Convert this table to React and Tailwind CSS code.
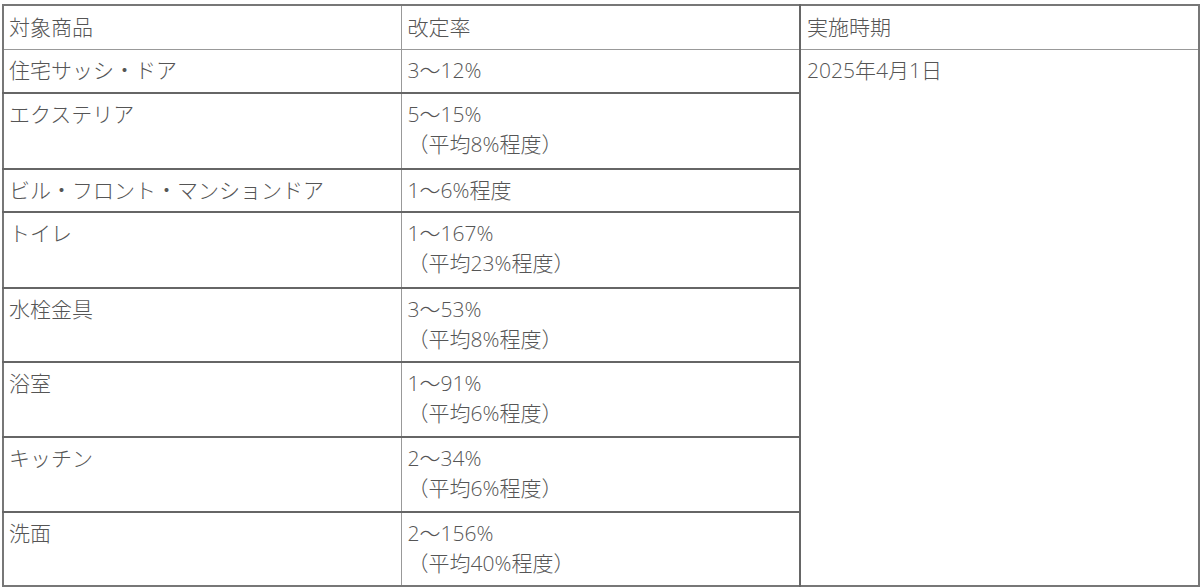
export default function App() {
  const rows = [
    { name: "住宅サッシ・ドア", rate: ["3〜12%"], h: 44 },
    { name: "エクステリア", rate: ["5〜15%", "（平均8%程度）"], h: 76 },
    { name: "ビル・フロント・マンションドア", rate: ["1〜6%程度"], h: 43 },
    { name: "トイレ", rate: ["1〜167%", "（平均23%程度）"], h: 76 },
    { name: "水栓金具", rate: ["3〜53%", "（平均8%程度）"], h: 74 },
    { name: "浴室", rate: ["1〜91%", "（平均6%程度）"], h: 75 },
    { name: "キッチン", rate: ["2〜34%", "（平均6%程度）"], h: 75 },
    { name: "洗面", rate: ["2〜156%", "（平均40%程度）"], h: 74 },
  ];
  const font = {
    fontFamily: '"Open Sans", "Noto Sans CJK JP", sans-serif',
  };
  return (
    <div className="bg-white w-[1200px] h-[587px] pt-[4px] pl-[2px]" style={font}>
      <table className="w-[1196px] border-collapse table-fixed text-[21px] leading-[30px] text-[#555] font-light border-2 border-[#777]">
        <colgroup>
          <col className="w-[398px]" />
          <col className="w-[399px]" />
          <col className="w-[399px]" />
        </colgroup>
        <tbody>
          <tr className="h-[44px]">
            <td className="align-top pl-[5px] pt-[6px] border-r border-b border-[#999]">対象商品</td>
            <td className="align-top pl-[6px] pt-[6px] border-r-2 border-b border-r-[#666] border-b-[#999]">改定率</td>
            <td className="align-top pl-[6px] pt-[6px] border-b border-[#999]">実施時期</td>
          </tr>
          {rows.map((r, i) => (
            <tr key={i} style={{ height: r.h }}>
              <td className={`align-top pl-[5px] pt-[5px] border-r border-r-[#999] ${i < rows.length - 1 ? "border-b-2 border-b-[#666]" : ""}`}>
                {r.name}
              </td>
              <td className={`align-top pl-[6px] pt-[5px] border-r-2 border-r-[#666] ${i < rows.length - 1 ? "border-b-2 border-b-[#666]" : ""}`}>
                {r.rate.map((t, j) => (
                  <div key={j}>{t}</div>
                ))}
              </td>
              {i === 0 && (
                <td rowSpan={rows.length} className="align-top pl-[6px] pt-[5px]">
                  2025年4月1日
                </td>
              )}
            </tr>
          ))}
        </tbody>
      </table>
    </div>
  );
}
